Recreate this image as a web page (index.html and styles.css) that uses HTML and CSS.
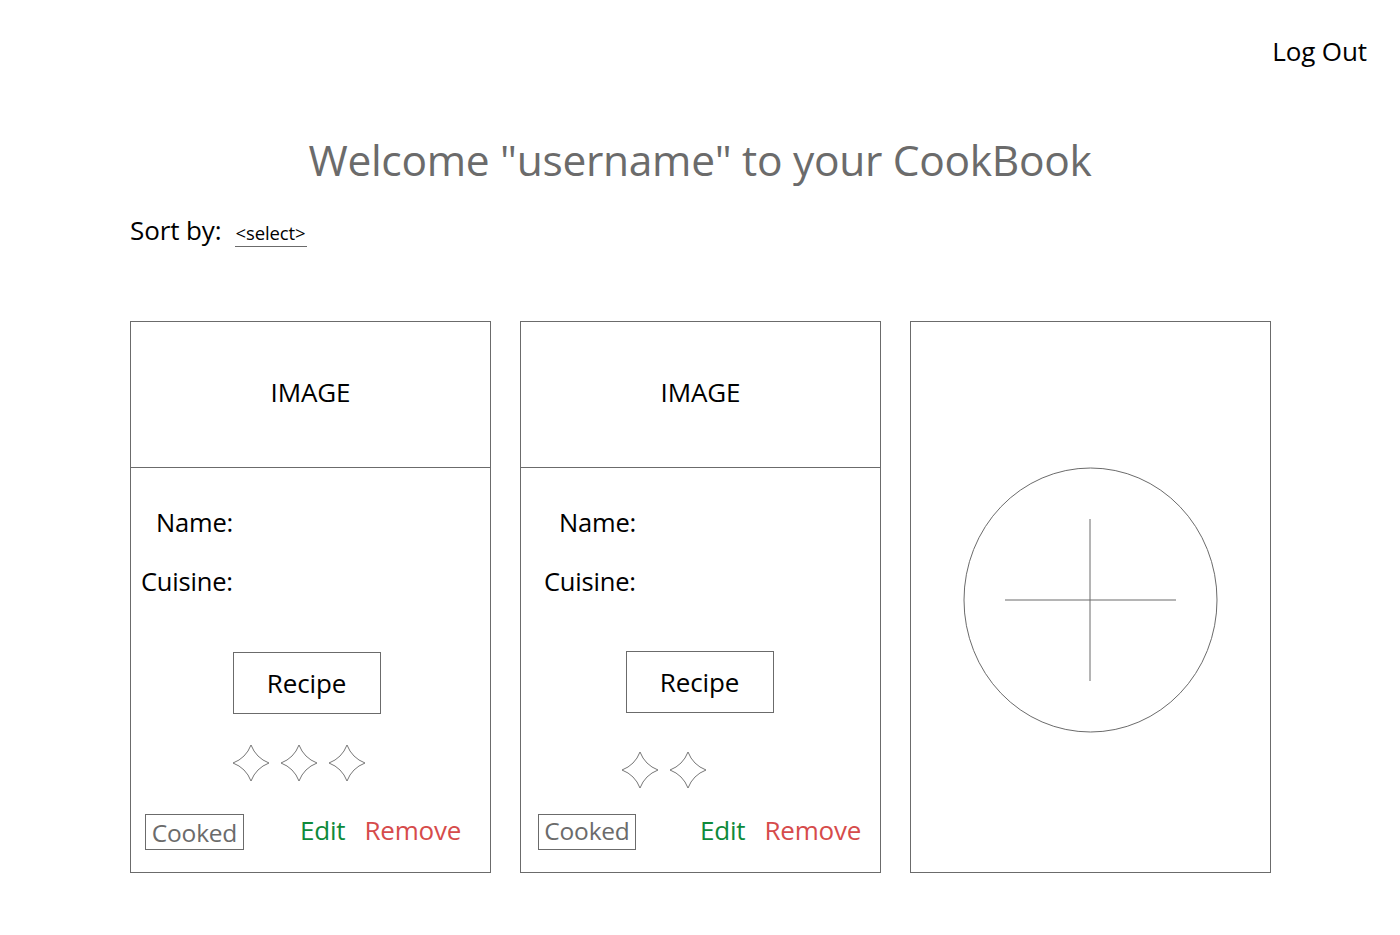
FILE: index.html
```html
<!DOCTYPE html>
<html>
<head>
<meta charset="utf-8">
<title>CookBook</title>
<link rel="stylesheet" href="styles.css">
</head>
<body>
<header class="topbar">
  <a class="logout">Log Out</a>
</header>
<h1 class="title">Welcome "username" to your CookBook</h1>
<div class="sort">
  <span class="sort-label">Sort by:</span>
  <span class="sort-select">&lt;select&gt;</span>
</div>
<main class="cards">
  <section class="card">
    <div class="card-image">IMAGE</div>
    <div class="card-body">
      <div class="field name one">Name:</div>
      <div class="field cuisine">Cuisine:</div>
      <div class="recipe-row"><span class="recipe-btn">Recipe</span></div>
      <div class="stars one">
        <svg class="star" viewBox="0 0 38 38"><path d="M19 1 Q24 14 37 19 Q24 24 19 37 Q14 24 1 19 Q14 14 19 1 Z"/></svg>
        <svg class="star" viewBox="0 0 38 38"><path d="M19 1 Q24 14 37 19 Q24 24 19 37 Q14 24 1 19 Q14 14 19 1 Z"/></svg>
        <svg class="star" viewBox="0 0 38 38"><path d="M19 1 Q24 14 37 19 Q24 24 19 37 Q14 24 1 19 Q14 14 19 1 Z"/></svg>
      </div>
      <div class="actions">
        <span class="cooked">Cooked</span>
        <span class="edit">Edit</span>
        <span class="remove">Remove</span>
      </div>
    </div>
  </section>
  <section class="card">
    <div class="card-image">IMAGE</div>
    <div class="card-body">
      <div class="field name two">Name:</div>
      <div class="field cuisine">Cuisine:</div>
      <div class="recipe-row two"><span class="recipe-btn">Recipe</span></div>
      <div class="stars two">
        <svg class="star" viewBox="0 0 38 38"><path d="M19 1 Q24 14 37 19 Q24 24 19 37 Q14 24 1 19 Q14 14 19 1 Z"/></svg>
        <svg class="star" viewBox="0 0 38 38"><path d="M19 1 Q24 14 37 19 Q24 24 19 37 Q14 24 1 19 Q14 14 19 1 Z"/></svg>
      </div>
      <div class="actions two">
        <span class="cooked">Cooked</span>
        <span class="edit">Edit</span>
        <span class="remove">Remove</span>
      </div>
    </div>
  </section>
  <section class="card add-card">
    <svg class="add-icon" viewBox="0 0 256 266" width="256" height="266">
      <ellipse cx="127.5" cy="133" rx="126.5" ry="132"/>
      <line x1="42" y1="133" x2="213" y2="133"/>
      <line x1="127" y1="52" x2="127" y2="214"/>
    </svg>
  </section>
</main>
</body>
</html>
```
FILE: styles.css
```css
html, body {
  margin: 0;
  padding: 0;
  background: #ffffff;
}
body {
  font-family: "Open Sans", "Noto Sans", sans-serif;
  color: #000;
  width: 1400px;
  height: 935px;
  overflow: hidden;
}
.topbar {
  display: flex;
  justify-content: flex-end;
  padding: 33px 33px 0 0;
  height: 44px;
}
.logout {
  font-size: 26px;
  line-height: 36px;
  letter-spacing: -0.1px;
}
.title {
  margin: 55px 0 0 0;
  text-align: center;
  font-weight: 400;
  font-size: 42.5px;
  line-height: 56px;
  color: #6b6b6b;
  letter-spacing: -0.3px;
}
.sort {
  display: flex;
  align-items: baseline;
  margin: 24px 0 0 130px;
  height: 40px;
}
.sort-label {
  font-size: 26px;
  line-height: 36px;
  letter-spacing: -0.1px;
}
.sort-select {
  margin-left: 13px;
  font-size: 18.5px;
  line-height: 24px;
  padding: 0 1px 1px 1px;
  border-bottom: 1px solid #6b6b6b;
  letter-spacing: -0.1px;
}
.cards {
  display: flex;
  gap: 29px;
  margin: 69px 0 0 130px;
}
.card {
  width: 359px;
  height: 550px;
  border: 1px solid #6b6b6b;
  display: flex;
  flex-direction: column;
}
.card-image {
  box-sizing: border-box;
  height: 146px;
  padding-bottom: 6px;
  border-bottom: 1px solid #6b6b6b;
  display: flex;
  align-items: center;
  justify-content: center;
  font-size: 26px;
  letter-spacing: -0.1px;
}
.card-body {
  display: flex;
  flex-direction: column;
  flex: 1;
}
.field {
  font-size: 25.5px;
  line-height: 36px;
  letter-spacing: -0.2px;
}
.name {
  margin-top: 36px;
}
.name.one { padding-left: 25px; }
.name.two { padding-left: 38px; }
.cuisine {
  margin-top: 23px;
  padding-left: 10px;
}
.card:nth-child(2) .cuisine { padding-left: 23px; }
.recipe-row {
  display: flex;
  justify-content: center;
  margin-top: 53px;
  padding-right: 8px;
}
.recipe-row.two {
  margin-top: 52px;
  padding-right: 2px;
}
.recipe-btn {
  box-sizing: border-box;
  width: 148px;
  height: 62px;
  border: 1px solid #6b6b6b;
  display: flex;
  align-items: center;
  justify-content: center;
  font-size: 26px;
  letter-spacing: -0.1px;
}
.stars {
  display: flex;
  gap: 10px;
}
.stars.one {
  margin: 30px 0 0 101px;
}
.stars.two {
  margin: 38px 0 0 100px;
}
.star {
  width: 38px;
  height: 38px;
}
.star path {
  fill: none;
  stroke: #777;
  stroke-width: 1;
}
.actions {
  display: flex;
  align-items: center;
  margin: 32px 0 0 14px;
}
.stars.two + .actions { margin-top: 25px; }
.actions.two { margin-left: 17px; }
.cooked {
  box-sizing: border-box;
  width: 99px;
  height: 36px;
  border: 1px solid #6b6b6b;
  color: #6b6b6b;
  font-size: 24.5px;
  line-height: 32px;
  padding-top: 2px;
  text-align: center;
  letter-spacing: -0.2px;
}
.actions.two .cooked {
  padding-top: 0;
  width: 98px;
}
.edit {
  margin-left: 56px;
  color: #0e8a3a;
  font-size: 26px;
  letter-spacing: -0.2px;
  line-height: 36px;
  margin-top: -4px;
}
.actions.two .edit { margin-left: 64px; }
.remove {
  margin-left: 19px;
  color: #d64b4b;
  font-size: 26px;
  letter-spacing: -0.2px;
  line-height: 36px;
  margin-top: -4px;
}
.add-card {
  align-items: center;
  padding-top: 145px;
  height: 405px;
}
.add-icon ellipse {
  fill: none;
  stroke: #6b6b6b;
  stroke-width: 1;
}
.add-icon line {
  stroke: #6b6b6b;
  stroke-width: 1;
}
```
